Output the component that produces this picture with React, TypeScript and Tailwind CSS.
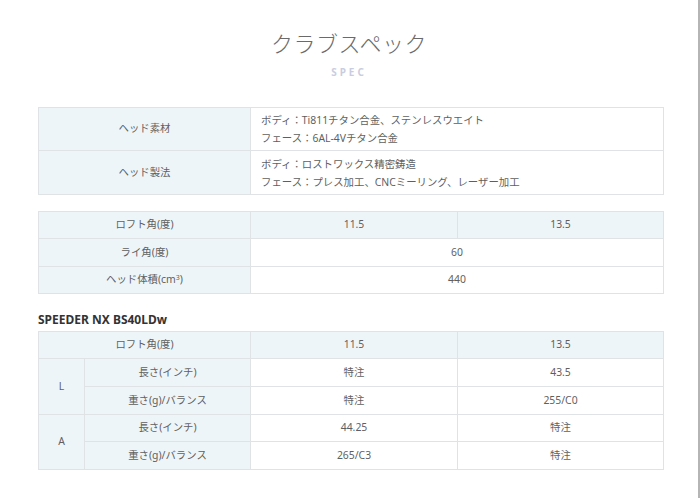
const font = { fontFamily: '"Noto Sans", "Noto Sans CJK JP", sans-serif' };

const th = "border border-[#dfe3e5] bg-[#eef5f9] text-center font-normal";
const td = "border border-[#dfe3e5] bg-white text-center";

export default function App() {
  return (
    <div
      className="w-[700px] h-[498px] bg-white border-r-2 border-[#b5b5b5] text-[10.4px] text-[#5f5f5f] overflow-hidden"
      style={font}
    >
      <div className="pt-[28px] text-center">
        <h1 className="text-[22px] leading-[30px] font-light text-[#6a6a6a] tracking-[0.5px]">クラブスペック</h1>
        <p className="mt-[8px] text-[10px] leading-[12px] font-bold tracking-[3px] text-[#c9cde0]">SPEC</p>
      </div>

      <div className="ml-[38px] w-[626px] mt-[29px]">
        <table className="w-full border-collapse table-fixed">
          <colgroup>
            <col className="w-[212px]" />
            <col />
          </colgroup>
          <tbody>
            <tr className="h-[43px]">
              <th className={th}>ヘッド素材</th>
              <td className="border border-[#dfe3e5] px-[10px] leading-[18px]">
                ボディ：Ti811チタン合金、ステンレスウエイト
                <br />
                フェース：6AL-4Vチタン合金
              </td>
            </tr>
            <tr className="h-[44px]">
              <th className={th}>ヘッド製法</th>
              <td className="border border-[#dfe3e5] px-[10px] leading-[18px]">
                ボディ：ロストワックス精密鋳造
                <br />
                フェース：プレス加工、CNCミーリング、レーザー加工
              </td>
            </tr>
          </tbody>
        </table>

        <table className="w-full border-collapse table-fixed mt-[16px]">
          <colgroup>
            <col className="w-[212px]" />
            <col className="w-[207px]" />
            <col />
          </colgroup>
          <tbody>
            <tr className="h-[27px]">
              <th className={th}>ロフト角(度)</th>
              <td className={th}>11.5</td>
              <td className={th}>13.5</td>
            </tr>
            <tr className="h-[28px]">
              <th className={th}>ライ角(度)</th>
              <td className={td} colSpan={2}>60</td>
            </tr>
            <tr className="h-[27px]">
              <th className={th}>
                ヘッド体積(cm<sup className="text-[7px]">3</sup>)
              </th>
              <td className={td} colSpan={2}>440</td>
            </tr>
          </tbody>
        </table>

        <h2 className="mt-[17px] text-[12px] leading-[18px] font-bold text-[#333]">SPEEDER NX BS40LDw</h2>

        <table className="w-full border-collapse table-fixed mt-[2px]">
          <colgroup>
            <col className="w-[46px]" />
            <col className="w-[166px]" />
            <col className="w-[207px]" />
            <col />
          </colgroup>
          <tbody>
            <tr className="h-[27px]">
              <th className={th} colSpan={2}>ロフト角(度)</th>
              <td className={th}>11.5</td>
              <td className={th}>13.5</td>
            </tr>
            <tr className="h-[28px]">
              <th className={th} rowSpan={2}>L</th>
              <th className={th}>長さ(インチ)</th>
              <td className={td}>特注</td>
              <td className={td}>43.5</td>
            </tr>
            <tr className="h-[28px]">
              <th className={th}>重さ(g)/バランス</th>
              <td className={td}>特注</td>
              <td className={td}>255/C0</td>
            </tr>
            <tr className="h-[27px]">
              <th className={th} rowSpan={2}>A</th>
              <th className={th}>長さ(インチ)</th>
              <td className={td}>44.25</td>
              <td className={td}>特注</td>
            </tr>
            <tr className="h-[28px]">
              <th className={th}>重さ(g)/バランス</th>
              <td className={td}>265/C3</td>
              <td className={td}>特注</td>
            </tr>
          </tbody>
        </table>
      </div>
    </div>
  );
}
